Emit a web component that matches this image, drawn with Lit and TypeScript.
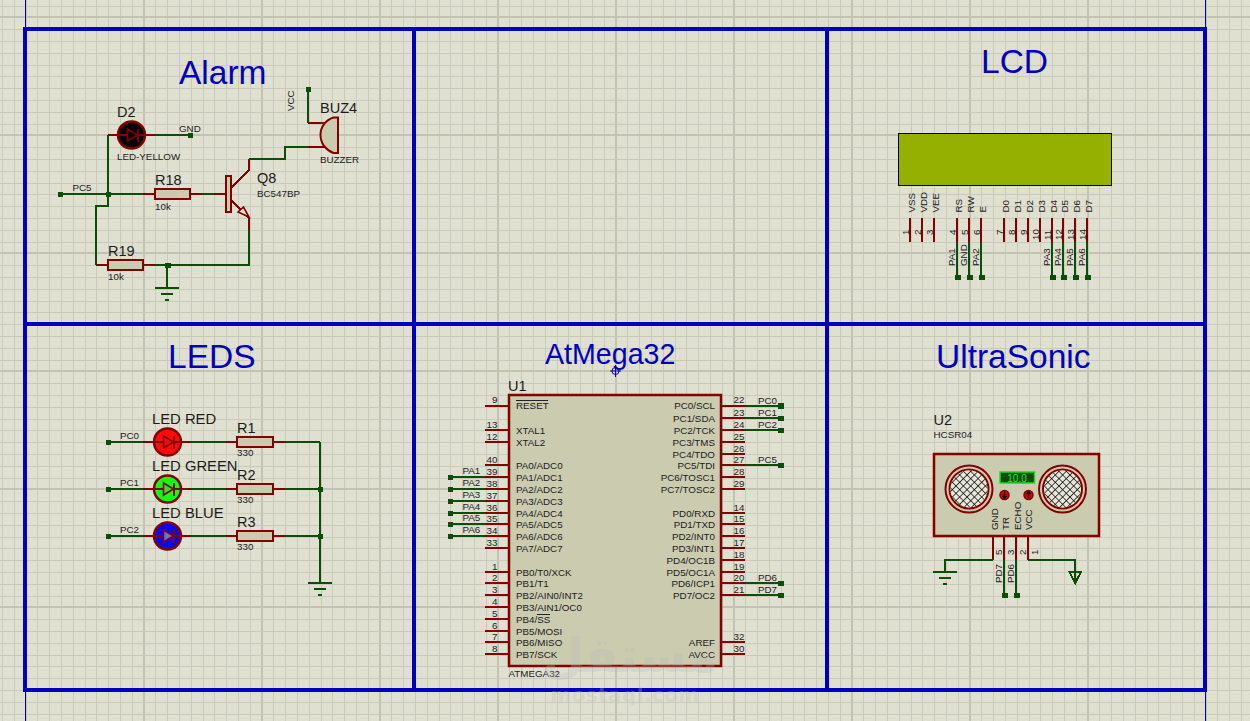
import { css, html, LitElement, svg } from "lit";
import { customElement } from "lit/decorators.js";

type Pt = [number, number];

const wire = (...p: Pt[]) =>
    svg`<polyline class="wire" points=${p.map((q) => q.join(",")).join(" ")}></polyline>`;
const lead = (...p: Pt[]) =>
    svg`<polyline class="lead" points=${p.map((q) => q.join(",")).join(" ")}></polyline>`;
const node = (x: number, y: number) =>
    svg`<rect class="node" x=${x - 2.5} y=${y - 2.5} width="5.5" height="5.5"></rect>`;
const label = (x: number, y: number, t: string, cls = "s") =>
    svg`<text class=${cls} x=${x} y=${y}>${t}</text>`;
const up = (x: number, y: number, t: string, cls = "s") =>
    svg`<text class=${cls} transform="translate(${x} ${y}) rotate(-90)">${t}</text>`;

const resistor = (x: number, y: number, w = 35) =>
    svg`<rect class="body thin" x=${x} y=${y - 5} width=${w} height="10"></rect>`;

const ground = (x: number, y: number, cls = "wire") => svg`
    <line class=${cls} x1=${x - 12} x2=${x + 12} y1=${y} y2=${y}></line>
    <line class=${cls} x1=${x - 6} x2=${x + 6} y1=${y + 6} y2=${y + 6}></line>
    <line class=${cls} x1=${x - 2} x2=${x + 2} y1=${y + 12} y2=${y + 12}></line>`;

const led = (x: number, y: number, fill: string, tri: string) => svg`
    <circle class="led" cx=${x} cy=${y} r="13.5" fill=${fill}></circle>
    <line class="lead" x1=${x - 14} x2=${x + 14} y1=${y} y2=${y}></line>
    <polygon class="diode" points="${x - 4},${y - 6} ${x - 4},${y + 6} ${x + 6},${y}" fill=${tri}></polygon>
    <line class="lead" x1=${x + 6} x2=${x + 6} y1=${y - 6.5} y2=${y + 6.5}></line>`;

const gridXs: { v: number; major: boolean }[] = [];
for (let i = -2; i < 105; i++) gridXs.push({ v: Math.round(25.5 + i * 11.8), major: (i + 100) % 10 === 0 });
const gridYs: { v: number; major: boolean }[] = [];
for (let i = -1; i < 62; i++) gridYs.push({ v: Math.round(17.3 + i * 11.8), major: (i + 100) % 10 === 0 });

const mcuLeft: [number, string, string][] = [
    [405.5, "9", "RESET"],
    [430, "13", "XTAL1"], [442, "12", "XTAL2"],
    [465, "40", "PA0/ADC0"], [477, "39", "PA1/ADC1"], [489, "38", "PA2/ADC2"], [501, "37", "PA3/ADC3"],
    [513, "36", "PA4/ADC4"], [524, "35", "PA5/ADC5"], [536, "34", "PA6/ADC6"], [548, "33", "PA7/ADC7"],
    [572, "1", "PB0/T0/XCK"], [583, "2", "PB1/T1"], [595, "3", "PB2/AIN0/INT2"], [607, "4", "PB3/AIN1/OC0"],
    [619, "5", "PB4/SS"], [631, "6", "PB5/MOSI"], [642, "7", "PB6/MISO"], [654, "8", "PB7/SCK"],
];
const mcuRight: [number, string, string][] = [
    [405.5, "22", "PC0/SCL"], [418, "23", "PC1/SDA"], [430, "24", "PC2/TCK"], [442, "25", "PC3/TMS"],
    [454, "26", "PC4/TDO"], [465, "27", "PC5/TDI"], [477, "28", "PC6/TOSC1"], [489, "29", "PC7/TOSC2"],
    [513, "14", "PD0/RXD"], [524, "15", "PD1/TXD"], [536, "16", "PD2/INT0"], [548, "17", "PD3/INT1"],
    [560, "18", "PD4/OC1B"], [572, "19", "PD5/OC1A"], [583, "20", "PD6/ICP1"], [595, "21", "PD7/OC2"],
    [642, "32", "AREF"], [654, "30", "AVCC"],
];
const paNets: [number, string][] = [[477, "PA1"], [489, "PA2"], [501, "PA3"], [513, "PA4"], [524, "PA5"], [536, "PA6"]];
const rightNets: [number, string][] = [[405.5, "PC0"], [418, "PC1"], [430, "PC2"], [465, "PC5"], [583, "PD6"], [595, "PD7"]];

const lcdPins: [number, string, string, string?][] = [
    [910, "VSS", "1"], [922, "VDD", "2"], [934, "VEE", "3"],
    [957, "RS", "4", "PA1"], [969, "RW", "5", "GND"], [981, "E", "6", "PA2"],
    [1004, "D0", "7"], [1016, "D1", "8"], [1028, "D2", "9"], [1040, "D3", "10"],
    [1052, "D4", "11", "PA3"], [1063, "D5", "12", "PA4"], [1075, "D6", "13", "PA5"], [1087, "D7", "14", "PA6"],
];

const sonar = (cx: number, cy: number) => svg`
    <circle class="ring" cx=${cx} cy=${cy} r="23.5"></circle>
    <circle class="ring" cx=${cx} cy=${cy} r="19.5"></circle>
    <circle class="mesh" cx=${cx} cy=${cy} r="18.5" fill="url(#mesh)"></circle>`;

@customElement("app-root")
export class AppRoot extends LitElement {
    static styles = css`
        :host {
            display: block;
            width: 1250px;
            height: 721px;
            overflow: hidden;
        }
        svg {
            display: block;
            background: #e0e0d1;
        }
        text {
            font-family: "Liberation Sans", Arial, sans-serif;
            fill: #1c1c1c;
        }
        .s { font-size: 9.8px; }
        .m { font-size: 14.5px; }
        .l { font-size: 14.8px; }
        .title { font-size: 33.5px; fill: #0000c0; }
        .title-sm { font-size: 28.6px; fill: #0000c0; }
        .end { text-anchor: end; }
        .minor { stroke: #c9cabb; stroke-width: 1; shape-rendering: crispEdges; }
        .major { stroke: #c2c3b3; stroke-width: 2; shape-rendering: crispEdges; }
        .frame { stroke: #0000c0; stroke-width: 3.5; fill: none; shape-rendering: crispEdges; }
        .hair { stroke: #0000c0; stroke-width: 1; shape-rendering: crispEdges; }
        .wire { stroke: #0a4e0a; stroke-width: 2; fill: none; shape-rendering: crispEdges; }
        .lead { stroke: #840000; stroke-width: 2; fill: none; shape-rendering: crispEdges; }
        .node { fill: #0a4e0a; shape-rendering: crispEdges; }
        .body { fill: #cbcbaf; stroke: #840000; stroke-width: 2.5; }
        .thin { stroke-width: 2; }
        .led { stroke: #840000; stroke-width: 2.5; }
        .diode { stroke: #840000; stroke-width: 1.6; }
        .bar { stroke: #222; stroke-width: 1; shape-rendering: crispEdges; }
        .lcd { fill: #96b000; stroke: #000; stroke-width: 1; }
        .ring { fill: none; stroke: #840000; stroke-width: 2; }
        .mesh { stroke: none; }
        .display { fill: #0b4a0b; stroke: #12e512; stroke-width: 1.5; }
        .readout { font-size: 10px; fill: #1cf01c; text-anchor: middle; }
        .btn { fill: #d80000; stroke: #840000; stroke-width: 1.5; }
        .btn-mark { stroke: #000; stroke-width: 1.4; fill: none; }
        .cursor { stroke: #0000c0; stroke-width: 1; fill: none; }
        .mark { fill: #bcbcb4; opacity: 0.3; font-weight: bold; }
        .mark-ar { font-family: "DejaVu Sans", sans-serif; font-size: 48px; }
        .mark-en { font-family: "DejaVu Sans", sans-serif; font-size: 20px; letter-spacing: 0.4px; }
    `;

    private renderGrid() {
        return svg`
            ${gridXs.map((g) => svg`<line class=${g.major ? "major" : "minor"} x1=${g.v} x2=${g.v} y1="0" y2="721"></line>`)}
            ${gridYs.map((g) => svg`<line class=${g.major ? "major" : "minor"} x1="0" x2="1250" y1=${g.v} y2=${g.v}></line>`)}`;
    }

    private renderFrame() {
        return svg`
            <line class="hair" x1="25.5" x2="25.5" y1="0" y2="721"></line>
            <line class="hair" x1="1205.5" x2="1205.5" y1="0" y2="721"></line>
            <rect class="frame" x="25" y="29" width="1180" height="661"></rect>
            <line class="frame" x1="25" x2="1205" y1="324" y2="324"></line>
            <line class="frame" x1="414" x2="414" y1="29" y2="690"></line>
            <line class="frame" x1="827" x2="827" y1="29" y2="690"></line>
            <text class="title" x="179" y="84">Alarm</text>
            <text class="title" x="981" y="73">LCD</text>
            <text class="title" x="168" y="368">LEDS</text>
            <text class="title-sm" x="545" y="364">AtMega32</text>
            <text class="title" x="936" y="368">UltraSonic</text>`;
    }

    private renderAlarm() {
        return svg`
            ${wire([60, 194], [143, 194])}
            ${wire([108, 194], [108, 135])}
            ${lead([108, 135], [118, 135])}
            ${led(131.5, 135, "#000", "#000")}
            ${lead([145, 135], [155, 135])}
            ${wire([155, 135], [190, 135])}
            ${node(190, 135)}${node(60, 194)}${node(108, 194)}
            ${label(117, 117, "D2", "m")}
            ${label(179, 132, "GND")}
            ${label(117, 160, "LED-YELLOW")}
            ${label(72.5, 191, "PC5")}

            ${lead([143, 194], [155, 194])}
            ${resistor(155, 194)}
            ${lead([190, 194], [202, 194])}
            ${wire([202, 194], [214, 194])}
            ${lead([214, 194], [226, 194])}
            ${label(155, 185, "R18", "m")}
            ${label(155, 210, "10k")}

            ${wire([108, 194], [108, 206], [96, 206], [96, 265])}
            ${lead([96, 265], [108, 265])}
            ${resistor(108, 265)}
            ${lead([143, 265], [155, 265])}
            ${wire([155, 265], [249, 265], [249, 230])}
            ${node(167.5, 265)}
            ${wire([167, 265], [167, 288])}
            ${ground(167, 288)}
            ${label(108, 256, "R19", "m")}
            ${label(108, 280, "10k")}

            <rect class="body thin" x="226" y="176" width="5" height="36"></rect>
            ${lead([231, 188], [249, 170], [249, 159])}
            ${lead([231, 200], [249, 218], [249, 230])}
            <polygon class="diode" points="238,212 243.5,207 249,217" fill="#e0e0d1"></polygon>
            ${wire([249, 159], [285, 159], [285, 147], [308, 147])}
            ${label(257, 183, "Q8", "m")}
            ${label(257, 197, "BC547BP")}

            ${node(308, 89)}
            ${wire([308, 89], [308, 123])}
            ${lead([308, 123], [325, 123])}
            ${lead([308, 147], [325, 147])}
            <path class="body thin" d="M338 117.5V153H333.5C325.5 150 320.5 143 320.5 135S325.5 120 333.5 117.5Z"></path>
            ${up(294, 111, "VCC")}
            ${label(320, 113, "BUZ4", "m")}
            ${label(320, 163, "BUZZER")}`;
    }

    private renderLeds() {
        const rows: [number, string, string, string, string, string][] = [
            [442, "PC0", "LED RED", "R1", "#ff0a0a", "#e81010"],
            [489, "PC1", "LED GREEN", "R2", "#0cff0c", "#30e030"],
            [536, "PC2", "LED BLUE", "R3", "#0808f0", "#6a70d8"],
        ];
        return svg`
            ${rows.map(([y, net, name, ref, fill, tri]) => svg`
                ${wire([108, y], [143, y])}
                ${node(108, y)}
                ${lead([143, y], [153, y])}
                ${led(167.5, y, fill, tri)}
                ${lead([181, y], [191, y])}
                ${wire([191, y], [226, y])}
                ${lead([226, y], [237, y])}
                ${resistor(237, y, 36)}
                ${lead([273, y], [285, y])}
                ${wire([285, y], [320, y])}
                ${label(120, y - 3, net)}
                ${label(152, y - 18, name, "l")}
                ${label(237, y - 9, ref, "m")}
                ${label(237, y + 14, "330")}
            `)}
            ${wire([320, 442], [320, 583])}
            ${node(320, 489)}${node(320, 536)}
            ${ground(320, 583)}`;
    }

    private renderMcu() {
        return svg`
            ${mcuLeft.map(([y, n]) => svg`
                ${lead([485, y], [509, y])}
                ${label(497.5, y - 2.5, n, "s end")}
            `)}
            ${mcuRight.map(([y, n]) => svg`
                ${lead([721, y], [745, y])}
                ${label(733.5, y - 2.5, n)}
            `)}
            <rect class="body" x="509" y="395" width="212" height="271"></rect>
            ${mcuLeft.map(([y, , t]) => label(516, y + 3.5, t))}
            ${mcuRight.map(([y, , t]) => label(715, y + 3.5, t, "s end"))}
            <line class="bar" x1="516" x2="548" y1="400" y2="400"></line>
            <line class="bar" x1="537" x2="550" y1="614" y2="614"></line>
            ${paNets.map(([y, t]) => svg`
                ${wire([450, y], [485, y])}
                ${node(450, y)}
                ${label(462.5, y - 3, t)}
            `)}
            ${rightNets.map(([y, t]) => svg`
                ${wire([745, y], [780, y])}
                ${node(780.5, y)}
                ${label(758, y - 2, t)}
            `)}
            ${label(508, 391, "U1", "m")}
            ${label(508.5, 677, "ATMEGA32")}
            <g>
                <circle class="cursor" cx="615.5" cy="371" r="3.5"></circle>
                <line class="cursor" x1="610" x2="621" y1="371" y2="371"></line>
                <line class="cursor" x1="615.5" x2="615.5" y1="365" y2="377"></line>
            </g>`;
    }

    private renderLcd() {
        return svg`
            <rect class="lcd" x="898.5" y="133.5" width="213" height="52"></rect>
            ${lcdPins.map(([x, name, num, net]) => svg`
                ${lead([x, 218], [x, 242])}
                ${up(x + 4.5, 212.5, name)}
                ${up(x - 1.5, num.length > 1 ? 240 : 235, num)}
                ${net ? svg`
                    ${wire([x, 242], [x, 277])}
                    ${node(x + 0.5, 277)}
                    ${up(x - 2.5, 266, net)}
                ` : ""}
            `)}`;
    }

    private renderSonic() {
        return svg`
            <defs>
                <pattern id="mesh" patternUnits="userSpaceOnUse" width="5.2" height="5.2" patternTransform="rotate(45)">
                    <rect width="5.2" height="5.2" fill="#e6e6da"></rect>
                    <path d="M0 0H5.2M0 0V5.2" stroke="#000" stroke-width="1.4"></path>
                </pattern>
            </defs>
            <rect class="body" x="934" y="454" width="165" height="82"></rect>
            ${sonar(969, 489)}
            ${sonar(1062.5, 489)}
            <rect class="display" x="1000" y="472" width="34.5" height="11"></rect>
            <text class="readout" x="1017" y="481.5">10.0</text>
            <circle class="btn" cx="1004.5" cy="495" r="4.5"></circle>
            <path class="btn-mark" d="M1004.5 491.5V498M1002.5 496L1004.5 498L1006.5 496"></path>
            <circle class="btn" cx="1028.5" cy="495" r="4.5"></circle>
            <path class="btn-mark" d="M1028.5 498.5V492M1026.5 494L1028.5 492L1030.5 494"></path>
            ${up(997.5, 530, "GND")}
            ${up(1008.5, 530, "TR")}
            ${up(1020.5, 530, "ECHO")}
            ${up(1032, 530, "VCC")}

            ${lead([993, 536], [993, 560])}
            ${wire([993, 560], [945, 560], [945, 572])}
            ${ground(945, 572)}
            ${lead([1004, 536], [1004, 560])}
            ${wire([1004, 560], [1004, 595])}
            ${node(1004.5, 595)}
            ${lead([1016, 536], [1016, 560])}
            ${wire([1016, 560], [1016, 595])}
            ${node(1016.5, 595)}
            ${lead([1028, 536], [1028, 560])}
            ${wire([1028, 560], [1075, 560], [1075, 583])}
            <polygon class="wire" points="1069.5,572 1081,572 1075.2,583"></polygon>

            ${up(1002, 555, "5")}
            ${up(1014, 555, "3")}
            ${up(1026, 555, "2")}
            ${up(1038, 555, "1")}
            ${up(1002, 583, "PD7")}
            ${up(1013.5, 583, "PD6")}
            ${label(933.5, 425, "U2", "m")}
            ${label(933.5, 438, "HCSR04")}`;
    }

    render() {
        return html`<svg width="1250" height="721" viewBox="0 0 1250 721" xmlns="http://www.w3.org/2000/svg">
            ${this.renderGrid()}
            ${this.renderFrame()}
            ${this.renderAlarm()}
            ${this.renderLeds()}
            ${this.renderMcu()}
            ${this.renderLcd()}
            ${this.renderSonic()}
            <text class="mark mark-ar" x="630" y="672" text-anchor="middle" direction="rtl">مستقل</text>
            <text class="mark mark-en" x="625" y="702" text-anchor="middle">mostaql.com</text>
        </svg>`;
    }
}

declare global {
    interface HTMLElementTagNameMap {
        "app-root": AppRoot;
    }
}
